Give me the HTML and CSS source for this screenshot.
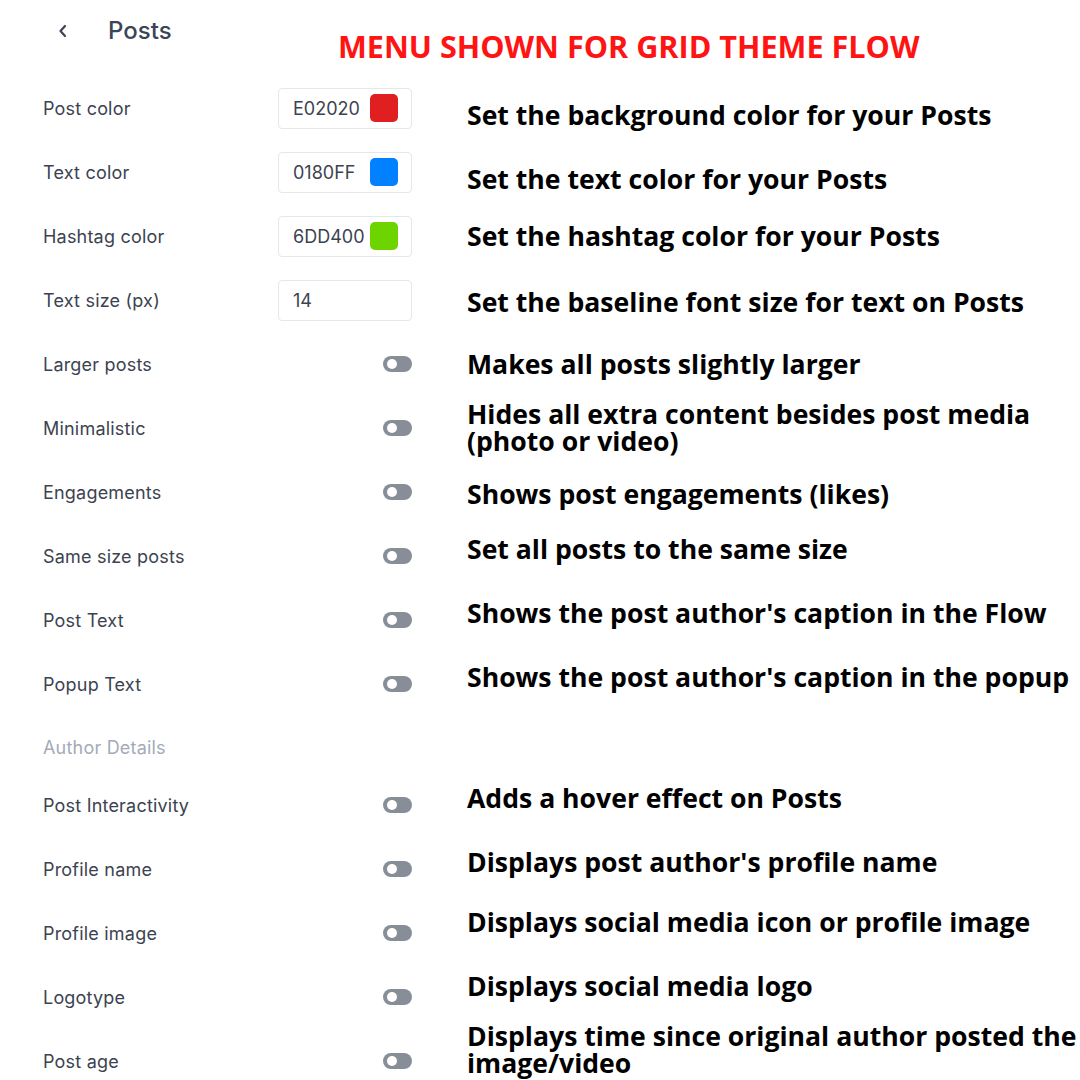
FILE: index.html
```html
<!DOCTYPE html>
<html>
<head>
<meta charset="utf-8">
<link rel="stylesheet" href="styles.css">
</head>
<body>
<div class="page">
  <header class="top">
    <div class="nav">
      <svg class="back" width="12" height="16" viewBox="0 0 12 16"><path d="M8 3 L3.5 8 L8 13" fill="none" stroke="#3a4556" stroke-width="2.2" stroke-linecap="round" stroke-linejoin="round"/></svg>
      <span class="title">Posts</span>
    </div>
    <h1 class="banner">MENU SHOWN FOR GRID THEME FLOW</h1>
  </header>

  <div class="rows">
    <div class="row">
      <div class="setting"><span class="label">Post color</span><div class="input"><span class="val">E02020</span><span class="swatch red"></span></div></div>
      <div class="ann dn">Set the background color for your Posts</div>
    </div>
    <div class="row">
      <div class="setting"><span class="label">Text color</span><div class="input"><span class="val">0180FF</span><span class="swatch blue"></span></div></div>
      <div class="ann dn">Set the text color for your Posts</div>
    </div>
    <div class="row">
      <div class="setting"><span class="label">Hashtag color</span><div class="input"><span class="val">6DD400</span><span class="swatch green"></span></div></div>
      <div class="ann">Set the hashtag color for your Posts</div>
    </div>
    <div class="row">
      <div class="setting"><span class="label">Text size (px)</span><div class="input"><span class="val">14</span></div></div>
      <div class="ann sdn">Set the baseline font size for text on Posts</div>
    </div>
    <div class="row">
      <div class="setting"><span class="label">Larger posts</span><span class="toggle"></span></div>
      <div class="ann">Makes all posts slightly larger</div>
    </div>
    <div class="row">
      <div class="setting"><span class="label">Minimalistic</span><span class="toggle"></span></div>
      <div class="ann">Hides all extra content besides post media<br>(photo or video)</div>
    </div>
    <div class="row">
      <div class="setting"><span class="label">Engagements</span><span class="toggle"></span></div>
      <div class="ann sdn">Shows post engagements (likes)</div>
    </div>
    <div class="row">
      <div class="setting"><span class="label">Same size posts</span><span class="toggle"></span></div>
      <div class="ann up">Set all posts to the same size</div>
    </div>
    <div class="row">
      <div class="setting"><span class="label">Post Text</span><span class="toggle"></span></div>
      <div class="ann up">Shows the post author's caption in the Flow</div>
    </div>
    <div class="row">
      <div class="setting"><span class="label">Popup Text</span><span class="toggle"></span></div>
      <div class="ann up">Shows the post author's caption in the popup</div>
    </div>
    <div class="section">Author Details</div>
    <div class="row">
      <div class="setting"><span class="label">Post Interactivity</span><span class="toggle"></span></div>
      <div class="ann up">Adds a hover effect on Posts</div>
    </div>
    <div class="row">
      <div class="setting"><span class="label">Profile name</span><span class="toggle"></span></div>
      <div class="ann up">Displays post author's profile name</div>
    </div>
    <div class="row">
      <div class="setting"><span class="label">Profile image</span><span class="toggle"></span></div>
      <div class="ann bup">Displays social media icon or profile image</div>
    </div>
    <div class="row">
      <div class="setting"><span class="label">Logotype</span><span class="toggle"></span></div>
      <div class="ann bup">Displays social media logo</div>
    </div>
    <div class="row">
      <div class="setting"><span class="label">Post age</span><span class="toggle"></span></div>
      <div class="ann xup">Displays time since original author posted the<br>image/video</div>
    </div>
  </div>
</div>
</body>
</html>
```

FILE: styles.css
```css
* { box-sizing: border-box; }
html, body { margin: 0; padding: 0; background: #fff; }
body { width: 1080px; height: 1080px; overflow: hidden; }
.page { width: 1080px; }

.top {
  height: 76px;
  display: flex;
  align-items: flex-start;
}
.nav {
  display: flex;
  align-items: center;
  padding: 18px 0 0 57px;
  width: 338px;
}
.back { display: block; margin-right: 39px; }
.title {
  font-family: Inter, "Noto Sans", sans-serif;
  font-size: 24px;
  font-weight: 500;
  color: #3a4556;
  line-height: 26px;
}
.banner {
  margin: 0;
  padding-top: 26px;
  font-family: "Open Sans", sans-serif;
  font-weight: 700;
  font-size: 30.6px;
  line-height: 40px;
  color: #ff1414;
  white-space: nowrap;
}

.rows { display: flex; flex-direction: column; }
.row {
  height: 64px;
  display: grid;
  grid-template-columns: 412px 1fr;
  align-items: center;
}
.setting {
  display: flex;
  align-items: center;
  justify-content: space-between;
  padding-left: 43px;
  height: 64px;
}
.label {
  font-family: Inter, "Noto Sans", sans-serif;
  font-size: 18px;
  letter-spacing: 0.2px;
  color: #3c4350;
  white-space: nowrap;
}
.input {
  width: 134px;
  height: 41px;
  border: 1px solid #e4e7ec;
  border-radius: 4px;
  display: flex;
  align-items: center;
  justify-content: space-between;
  padding: 0 13px 0 14px;
}
.val {
  font-family: Inter, "Noto Sans", sans-serif;
  font-size: 18px;
  color: #3c4350;
}
.swatch {
  width: 28px;
  height: 28px;
  border-radius: 5px;
}
.red { background: #e02020; }
.blue { background: #0180ff; }
.green { background: #6dd400; }

.toggle {
  width: 29px;
  height: 16px;
  border-radius: 8px;
  background: #878e97;
  display: flex;
  align-items: center;
  padding-left: 4px;
}
.toggle::before {
  content: "";
  width: 10px;
  height: 10px;
  border-radius: 50%;
  background: #fff;
}

.ann {
  padding-left: 55px;
  font-family: "Open Sans", sans-serif;
  font-weight: 700;
  font-size: 26.6px;
  line-height: 27px;
  color: #000;
  white-space: nowrap;
}
.ann.dn { padding-top: 15px; }
.ann.sdn { padding-top: 5px; }
.ann.up { padding-bottom: 13px; }
.ann.bup { padding-bottom: 21px; }
.ann.xup { margin-top: -22px; }

.section {
  height: 57px;
  padding: 21px 0 0 43px;
  font-family: Inter, "Noto Sans", sans-serif;
  font-size: 18px;
  letter-spacing: 0.2px;
  line-height: 22px;
  color: #a3abb8;
}
```
